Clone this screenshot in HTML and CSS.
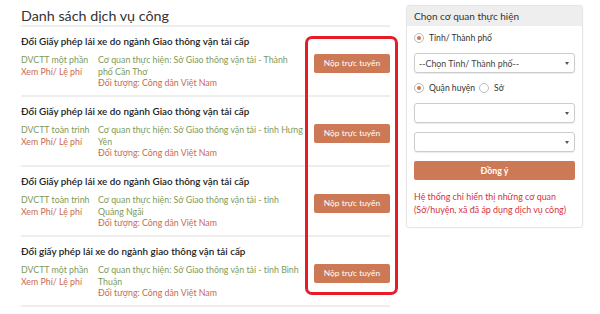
FILE: index.html
```html
<!DOCTYPE html>
<html lang="vi">
<head>
<meta charset="utf-8">
<link rel="stylesheet" href="styles.css">
</head>
<body>
<div class="page">
  <div class="main">
    <h1 class="heading">Danh sách dịch vụ công</h1>
    <div class="item">
      <div class="info">
        <div class="item-title">Đổi Giấy phép lái xe do ngành Giao thông vận tải cấp</div>
        <div class="details">
          <div class="meta"><div class="level">DVCTT một phần</div><div class="fee">Xem Phí/ Lệ phí</div></div>
          <div class="desc"><div class="agency">Cơ quan thực hiện: Sở Giao thông vận tải - Thành phố Cần Thơ</div><div class="target">Đối tượng: Công dân Việt Nam</div></div>
        </div>
      </div>
      <div class="action"><span class="btn">Nộp trực tuyến</span></div>
    </div>
    <div class="item">
      <div class="info">
        <div class="item-title">Đổi Giấy phép lái xe do ngành Giao thông vận tải cấp</div>
        <div class="details">
          <div class="meta"><div class="level">DVCTT toàn trình</div><div class="fee">Xem Phí/ Lệ phí</div></div>
          <div class="desc"><div class="agency">Cơ quan thực hiện: Sở Giao thông vận tải - tỉnh Hưng Yên</div><div class="target">Đối tượng: Công dân Việt Nam</div></div>
        </div>
      </div>
      <div class="action"><span class="btn">Nộp trực tuyến</span></div>
    </div>
    <div class="item">
      <div class="info">
        <div class="item-title">Đổi Giấy phép lái xe do ngành Giao thông vận tải cấp</div>
        <div class="details">
          <div class="meta"><div class="level">DVCTT toàn trình</div><div class="fee">Xem Phí/ Lệ phí</div></div>
          <div class="desc"><div class="agency">Cơ quan thực hiện: Sở Giao thông vận tải - tỉnh Quảng Ngãi</div><div class="target">Đối tượng: Công dân Việt Nam</div></div>
        </div>
      </div>
      <div class="action"><span class="btn">Nộp trực tuyến</span></div>
    </div>
    <div class="item">
      <div class="info">
        <div class="item-title">Đổi giấy phép lái xe do ngành giao thông vận tải cấp</div>
        <div class="details">
          <div class="meta"><div class="level">DVCTT một phần</div><div class="fee">Xem Phí/ Lệ phí</div></div>
          <div class="desc"><div class="agency">Cơ quan thực hiện: Sở Giao thông vận tải - tỉnh Bình Thuận</div><div class="target">Đối tượng: Công dân Việt Nam</div></div>
        </div>
      </div>
      <div class="action"><span class="btn">Nộp trực tuyến</span></div>
    </div>
    <div class="highlight"></div>
  </div>
  <div class="side">
    <div class="panel">
      <div class="panel-head">Chọn cơ quan thực hiện</div>
      <div class="panel-body">
        <div class="radio-row"><span class="radio checked"></span><span>Tỉnh/ Thành phố</span></div>
        <div class="select"><span>--Chọn Tỉnh/ Thành phố--</span><span class="caret"></span></div>
        <div class="radio-row"><span class="radio checked"></span><span>Quận huyện</span><span class="radio"></span><span>Sở</span></div>
        <div class="select"><span></span><span class="caret"></span></div>
        <div class="select"><span></span><span class="caret"></span></div>
        <div class="submit">Đồng ý</div>
        <div class="note">Hệ thống chỉ hiển thị những cơ quan (Sở/huyện, xã đã áp dụng dịch vụ công)</div>
      </div>
    </div>
  </div>
</div>
</body>
</html>
```
FILE: styles.css
```css
* { box-sizing: border-box; }
html, body { margin: 0; padding: 0; background: #fff; }
body { font-family: Lato, "Open Sans", sans-serif; color: #333; width: 600px; height: 314px; overflow: hidden; }
.page { display: flex; padding: 5px 0 0 21px; gap: 16px; }
.main { width: 369px; position: relative; }
.heading { margin: 0; font-weight: 400; font-size: 14.3px; line-height: 18px; padding: 2px 0 0; height: 22px; color: #333; border-bottom: 2px solid #eeeeee; }
.item { display: flex; align-items: flex-start; height: 70px; border-bottom: 2px solid #eeeeee; padding-top: 8px; }
.info { flex: 1; }
.item-title { font-size: 9.85px; font-weight: 600; color: #222; line-height: 12px; margin-bottom: 7px; }
.details { display: flex; font-size: 8.8px; line-height: 11.6px; }
.meta { width: 77px; }
.desc { width: 205.5px; }
.level { color: #7d9a5c; }
.agency { color: #7d9a5c; }
.fee, .target { color: #c96a4e; }
.action { width: 76px; margin-top: 19px; }
.btn { display: block; height: 19px; line-height: 19px; text-align: center; background: #cd7956; color: #fff; font-size: 8.4px; border-radius: 2px; }
.highlight { position: absolute; left: 284px; top: 31px; width: 93px; height: 259px; border: 3px solid #e61d27; border-radius: 7px; }
.side { width: 177px; }
.panel { border: 1px solid #e6e6e6; border-radius: 3px; box-shadow: 0 0 2px rgba(0,0,0,0.06); }
.panel-head { background: #eeeeee; height: 20px; line-height: 20px; padding-left: 7px; font-size: 10px; color: #333; }
.panel-body { padding: 3px 7px 11px; }
.radio-row { display: flex; align-items: center; gap: 4px; height: 18px; font-size: 8.6px; color: #333; }
.radio { width: 10px; height: 10px; border-radius: 50%; border: 1px solid #bbb; background: #fff; position: relative; margin-right: 1px; }
.radio.checked::after { content: ""; position: absolute; left: 2px; top: 2px; width: 4px; height: 4px; border-radius: 50%; background: #d0764f; }
.select { display: flex; justify-content: space-between; align-items: center; height: 20px; border: 1px solid #cccccc; border-radius: 3px; padding: 0 5px 0 4px; margin: 6px 0 6px; font-size: 8.8px; color: #444; box-shadow: 0 1px 1px rgba(0,0,0,0.08); }
.select + .select { margin-top: 9px; }
.caret { width: 0; height: 0; border-left: 2px solid transparent; border-right: 2px solid transparent; border-top: 3px solid #555; }
.submit { height: 19px; line-height: 19px; background: #cd7956; color: #fff; text-align: center; font-size: 8.8px; font-weight: 700; border-radius: 2px; margin-top: 9px; }
.note { margin-top: 10px; color: #d6303d; font-size: 8.9px; line-height: 13px; }
```
